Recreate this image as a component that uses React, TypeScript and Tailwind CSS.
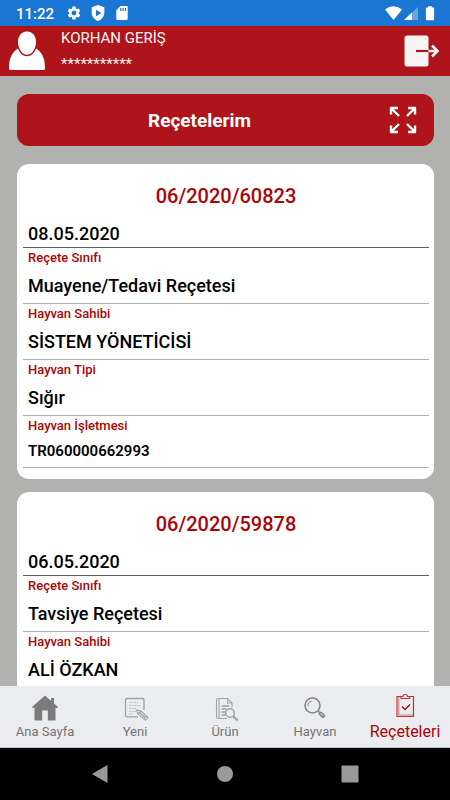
import React, { useState } from 'react';

interface Field {
  label: string;
  value: string;
  small?: boolean;
}

interface Prescription {
  no: string;
  date: string;
  fields: Field[];
}

const prescriptions: Prescription[] = [
  {
    no: '06/2020/60823',
    date: '08.05.2020',
    fields: [
      { label: 'Reçete Sınıfı', value: 'Muayene/Tedavi Reçetesi' },
      { label: 'Hayvan Sahibi', value: 'SİSTEM YÖNETİCİSİ' },
      { label: 'Hayvan Tipi', value: 'Sığır' },
      { label: 'Hayvan İşletmesi', value: 'TR060000662993', small: true },
    ],
  },
  {
    no: '06/2020/59878',
    date: '06.05.2020',
    fields: [
      { label: 'Reçete Sınıfı', value: 'Tavsiye Reçetesi' },
      { label: 'Hayvan Sahibi', value: 'ALİ ÖZKAN' },
    ],
  },
];

function StatusBar() {
  return (
    <div className="flex h-[26px] shrink-0 items-center justify-between bg-[#1976d2] pl-4 pr-[15px] text-white">
      <div className="flex items-center">
        <span className="w-[50px] pt-px text-[15px] leading-5 font-medium">11:22</span>
        <svg className="mr-2 size-4" viewBox="0 0 24 24" fill="currentColor">
          <path d="M19.14 12.94c.04-.3.06-.61.06-.94 0-.32-.02-.64-.07-.94l2.03-1.58a.49.49 0 0 0 .12-.61l-1.92-3.32a.49.49 0 0 0-.59-.22l-2.39.96c-.5-.38-1.03-.7-1.62-.94l-.36-2.54a.48.48 0 0 0-.48-.41h-3.84c-.24 0-.43.17-.47.41l-.36 2.54c-.59.24-1.13.57-1.62.94l-2.39-.96a.48.48 0 0 0-.59.22L2.74 8.87a.47.47 0 0 0 .12.61l2.03 1.58c-.05.3-.09.63-.09.94s.02.64.07.94l-2.03 1.58a.49.49 0 0 0-.12.61l1.92 3.32c.12.22.37.29.59.22l2.39-.96c.5.38 1.03.7 1.62.94l.36 2.54c.05.24.24.41.48.41h3.84c.24 0 .44-.17.47-.41l.36-2.54c.59-.24 1.13-.56 1.62-.94l2.39.96c.22.08.47 0 .59-.22l1.92-3.32a.47.47 0 0 0-.12-.61l-2.01-1.58zM12 15.6a3.6 3.6 0 1 1 0-7.2 3.6 3.6 0 0 1 0 7.2z" />
        </svg>
        <svg className="mr-2 size-4" viewBox="0 0 24 24" fill="currentColor">
          <path fillRule="evenodd" d="M12 0 2.5 3.5v7.7c0 5.9 4 11 9.5 12.8 5.5-1.8 9.5-6.9 9.5-12.8V3.500zM9 7l8 5-8 5z" />
        </svg>
        <svg className="ml-[2px] h-4 w-3" viewBox="0 0 12 16" fill="currentColor">
          <path fillRule="evenodd" d="M4.5 1h6a1.2 1.2 0 0 1 1.2 1.2v11.6a1.2 1.2 0 0 1-1.2 1.2h-9a1.2 1.2 0 0 1-1.2-1.2V5.200zM4.200 3v3h1.200V3zM6.500 3v3h1.200V3zM8.800 3v3H10V3z" />
        </svg>
      </div>
      <svg className="h-4 w-[50px]" viewBox="0 0 50 16" fill="currentColor">
        <path d="M0 4.500Q8.500-1.800 17 4.500L8.500 15z" />
        <path d="M33 2v13H19z" opacity=".35" />
        <path d="M27 7.500V15h-8z" />
        <path d="M43 1.200h4V2.500h1.300a.8.8 0 0 1 .8.8v11.200a.8.8 0 0 1-.8.8h-6.600a.8.8 0 0 1-.8-.8V3.300a.8.8 0 0 1 .8-.8H43z" />
      </svg>
    </div>
  );
}

function Header() {
  return (
    <header className="flex h-[50px] shrink-0 items-center bg-[#ae141a] pl-2 pr-[10px] text-[#fbf3f3]">
      <svg className="h-10 w-[38px] text-white" viewBox="0 0 38 40" fill="currentColor">
        <path d="M1 37.200C1 28 3.500 21.500 10 17.500c2 5.500 5.300 7.700 9 7.700s7-2.200 9-7.700C34.500 21.500 37 28 37 37.200c0 1.300-.8 1.900-2 1.900H3c-1.200 0-2-.6-2-1.900z" />
        <path d="M19 .5c5.500 0 9 4.500 9 10.500 0 6.500-4 12.700-9 12.700s-9-6.200-9-12.700C10 5 13.500.5 19 .5z" />
      </svg>
      <div className="ml-[15px] flex-1 pb-[2px] text-[15px]">
        <div className="leading-6">KORHAN GERİŞ</div>
        <div className="pt-1 leading-5">***********</div>
      </div>
      <button aria-label="Çıkış">
        <svg className="h-8 w-9" viewBox="0 0 36 32" fill="none">
          <rect x="0.500" y="0.500" width="24" height="31" rx="2.500" fill="#f8f4f4" />
          <path d="M12 16h12.500" stroke="#ae141a" strokeWidth="2.200" />
          <path d="M24.500 16H34M28 10.500 33.500 16l-5.500 5.500" stroke="#f8f4f4" strokeWidth="2.600" />
        </svg>
      </button>
    </header>
  );
}

function PrescriptionCard({ item }: { item: Prescription }) {
  return (
    <article className="rounded-xl bg-white pr-[5px] pb-[11px] pl-[6px]">
      <h2 className="flex h-[57px] items-center justify-center pt-[6px] text-xl font-medium text-[#a80507]">{item.no}</h2>
      <div className="flex h-[27px] items-center border-b border-[#606060] px-[5px] text-lg font-medium">{item.date}</div>
      <dl>
        {item.fields.map((f) => (
          <div key={f.label} className="border-b border-[#b0b0b0] px-[5px]">
            <dt className="text-[13px] leading-5 font-medium text-[#a80507]">{f.label}</dt>
            <dd className={f.small ? 'text-[15px] leading-[31px] font-semibold' : 'text-lg leading-[35px] font-medium'}>{f.value}</dd>
          </div>
        ))}
      </dl>
    </article>
  );
}

function HomeIcon() {
  return (
    <svg className="size-7" viewBox="0 0 28 28" fill="#7b7b7b">
      <path d="M14 1.500 1 13l1 1.200 1.500-.7V26.500H11.200V16.500h5.600v10h7.700V13.500l1.500.7L27 13l-4-3.600V4h-2.800v2.900z" />
    </svg>
  );
}

function NoteIcon() {
  return (
    <svg className="size-7" viewBox="0 0 28 28" fill="none" stroke="#a2a2a2">
      <path d="M17 22.800H6a1.500 1.500 0 0 1-1.500-1.500V6A1.500 1.500 0 0 1 6 4.500h15.500A1.500 1.500 0 0 1 23 6v10" strokeWidth="1.300" />
      <path d="M8 8.500h9M8 11.500h12M8 14.500h7M8 17.500h7M8 20h4" strokeDasharray="2 .6" strokeWidth=".8" opacity=".7" />
      <path d="m15.500 16 1.500 4 7.500 6.300 2.500-2.500-7-6.800zM17 20l3-3M22.500 25l2.800-2.800M18.500 18.500l6 5.500" strokeWidth="1.100" />
    </svg>
  );
}

function DocSearchIcon() {
  return (
    <svg className="size-7" viewBox="0 0 28 28" fill="none" stroke="#a2a2a2">
      <path d="M16 24.500H7A1.500 1.500 0 0 1 5.500 23V6A1.500 1.500 0 0 1 7 4.500h9.500L21 9v4.500M16.500 4.500V9H21M8 5v19" strokeWidth="1.100" />
      <path d="M10.500 12h8M10.500 15h5M10.500 18h4M10.500 21h4" stroke="#777" strokeWidth="1.100" />
      <circle cx="19" cy="19" r="4.300" strokeWidth="1.500" />
      <path d="m22.300 22.300 4.200 4" strokeWidth="2.400" />
    </svg>
  );
}

function SearchIcon() {
  return (
    <svg className="size-7" viewBox="0 0 28 28" fill="none" stroke="#858585">
      <circle cx="11.500" cy="11.500" r="7.500" strokeWidth="1.600" />
      <path d="M7 12a4.800 4.800 0 0 1 3.500-5" />
      <path d="m16.700 16.700 2.500 2.300" strokeWidth="1.500" />
      <path d="m19.500 19.500 2.700 2.400" strokeWidth="4" strokeLinecap="round" />
      <path d="m19.500 19.500 2.700 2.400" stroke="#c5c5c7" strokeWidth="1.400" />
    </svg>
  );
}

function ClipboardIcon() {
  return (
    <svg className="size-7" viewBox="0 0 28 28" fill="none" stroke="#bd3438">
      <path d="M10 4.500H6V24.500h16.500V4.500h-4" strokeWidth="1.200" />
      <path d="M7.800 5v18H22" strokeWidth=".6" />
      <path d="M10 6.500v-2h2c0-2.700 4.500-2.700 4.500 0h2v2z" strokeWidth="1.200" />
      <path d="m11 14.500 3 3 5-5" stroke="#a80507" strokeWidth="1.300" />
    </svg>
  );
}

const tabs = [
  { name: 'Ana Sayfa', icon: HomeIcon },
  { name: 'Yeni', icon: NoteIcon },
  { name: 'Ürün', icon: DocSearchIcon },
  { name: 'Hayvan', icon: SearchIcon },
  { name: 'Reçeteleri', icon: ClipboardIcon },
];

export default function App() {
  const [active, setActive] = useState('Reçeteleri');

  return (
    <div className="flex h-dvh flex-col bg-[#b1b1af] font-['Roboto',sans-serif] text-black">
      <StatusBar />
      <Header />

      <main className="min-h-0 flex-1 overflow-y-auto pt-[18px] pr-4 pl-[17px] [scrollbar-width:none]">
        <div className="mb-[18px] flex h-[52px] items-center rounded-xl bg-[#ae141a] px-[17px] text-white">
          <h1 className="flex-1 pt-[2px] pr-6 text-center text-[19px] font-bold">Reçetelerim</h1>
          <button aria-label="Tam ekran">
            <svg className="size-7" viewBox="0 0 28 28" fill="none" stroke="currentColor" strokeWidth="2.400" strokeLinejoin="round">
              <path d="M2 8.500V2h7M2 2l8 8M19 2h7v6.500M26 2l-8 8M2 19.500V26h7M2 26l8-8M26 19.500V26h-7M26 26l-8-8" />
            </svg>
          </button>
        </div>

        <div className="flex flex-col gap-[13px]">
          {prescriptions.map((p) => (
            <PrescriptionCard key={p.no} item={p} />
          ))}
        </div>
      </main>

      <nav className="flex h-[62px] shrink-0 border-b border-[#c4c4c4] bg-[#ebecf0]">
        {tabs.map(({ name, icon: Icon }) => (
          <button
            key={name}
            onClick={() => setActive(name)}
            className={`flex flex-1 basis-0 flex-col items-center ${active === name ? 'pt-[6px] text-base text-[#a80507]' : 'pt-2 text-[13px] text-[#747474]'}`}
          >
            <Icon />
            <span className={active === name ? 'leading-6' : 'leading-5'}>{name}</span>
          </button>
        ))}
      </nav>

      <div className="flex h-[52px] shrink-0 items-center justify-around bg-black px-[37px]">
        <button aria-label="Geri">
          <svg className="size-5" viewBox="0 0 20 20" fill="#9a9a9a"><path d="M17.500 1v18L2 10z" /></svg>
        </button>
        <button aria-label="Ana ekran">
          <svg className="size-5" viewBox="0 0 20 20" fill="#9a9a9a"><circle cx="10" cy="10" r="8" /></svg>
        </button>
        <button aria-label="Son uygulamalar">
          <svg className="size-5" viewBox="0 0 20 20" fill="#9a9a9a"><rect x="1.500" y="1.500" width="17" height="17" rx="1" /></svg>
        </button>
      </div>
    </div>
  );
}
